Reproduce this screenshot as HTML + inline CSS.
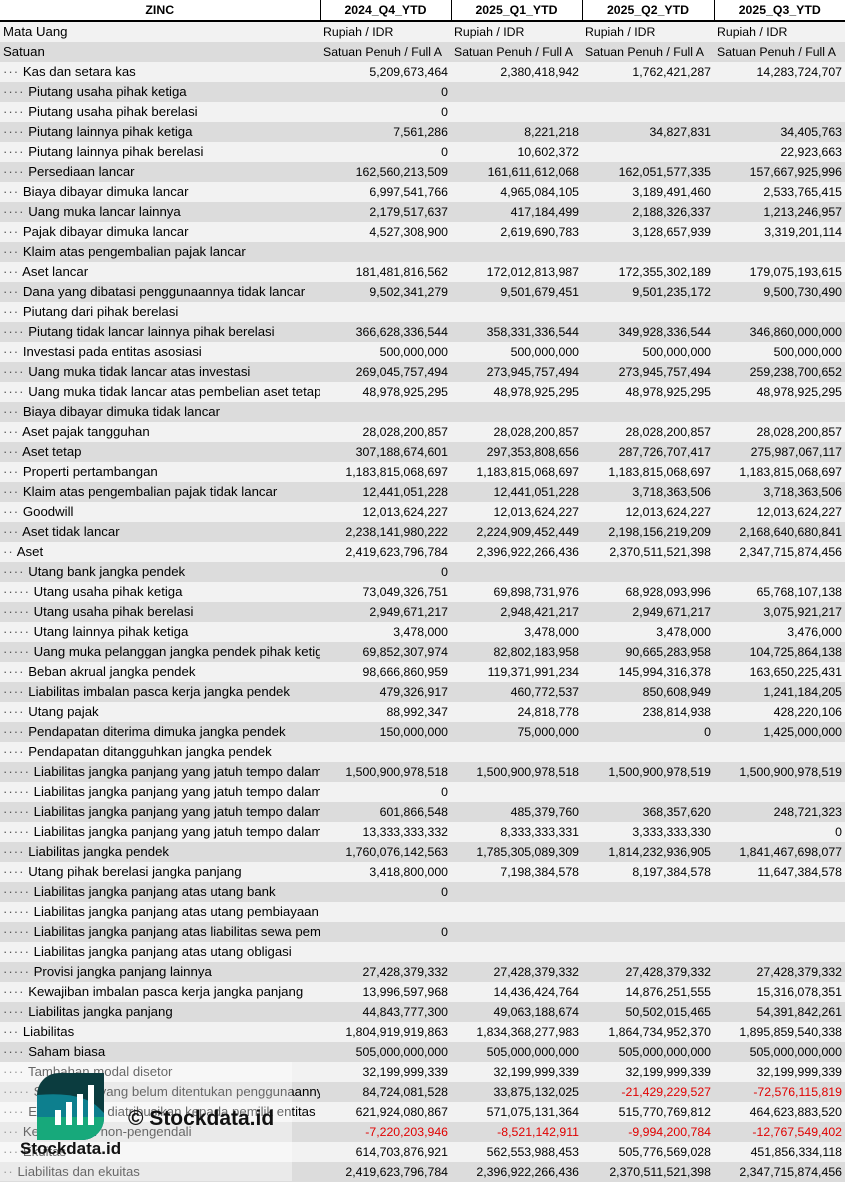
<!DOCTYPE html>
<html><head><meta charset="utf-8"><style>
body{margin:0;width:845px;height:1181px;overflow:hidden;background:#fff;font-family:"Liberation Sans",sans-serif;font-size:12.3px;color:#000}
table{border-collapse:collapse;table-layout:fixed;width:845px}
td{height:20px;padding:0 3px;white-space:nowrap;overflow:hidden;text-overflow:clip;line-height:20px;box-sizing:border-box}
td:first-child{font-size:13.2px}
tr:nth-child(even) td{background:#f2f2f2}
tr:nth-child(odd) td{background:#dcdcdc}
tr.h td{background:#fff;font-weight:bold;text-align:center;border-right:1px solid #000;border-bottom:2px solid #000;height:21px;line-height:19px;font-size:12.3px}
td.n{text-align:right}
.r{color:#e00000}
.d{color:#555;letter-spacing:1px}
</style></head><body>
<table>
<colgroup><col style="width:320px"><col style="width:131px"><col style="width:131px"><col style="width:132px"><col style="width:131px"></colgroup>
<tr class="h"><td>ZINC</td><td>2024_Q4_YTD</td><td>2025_Q1_YTD</td><td>2025_Q2_YTD</td><td style="border-right:none">2025_Q3_YTD</td></tr>
<tr><td>Mata Uang</td><td>Rupiah / IDR</td><td>Rupiah / IDR</td><td>Rupiah / IDR</td><td>Rupiah / IDR</td></tr>
<tr><td>Satuan</td><td>Satuan Penuh / Full A</td><td>Satuan Penuh / Full A</td><td>Satuan Penuh / Full A</td><td>Satuan Penuh / Full A</td></tr>
<tr><td><span class="d">···</span> Kas dan setara kas</td><td class="n">5,209,673,464</td><td class="n">2,380,418,942</td><td class="n">1,762,421,287</td><td class="n">14,283,724,707</td></tr>
<tr><td><span class="d">····</span> Piutang usaha pihak ketiga</td><td class="n">0</td><td></td><td></td><td></td></tr>
<tr><td><span class="d">····</span> Piutang usaha pihak berelasi</td><td class="n">0</td><td></td><td></td><td></td></tr>
<tr><td><span class="d">····</span> Piutang lainnya pihak ketiga</td><td class="n">7,561,286</td><td class="n">8,221,218</td><td class="n">34,827,831</td><td class="n">34,405,763</td></tr>
<tr><td><span class="d">····</span> Piutang lainnya pihak berelasi</td><td class="n">0</td><td class="n">10,602,372</td><td></td><td class="n">22,923,663</td></tr>
<tr><td><span class="d">····</span> Persediaan lancar</td><td class="n">162,560,213,509</td><td class="n">161,611,612,068</td><td class="n">162,051,577,335</td><td class="n">157,667,925,996</td></tr>
<tr><td><span class="d">···</span> Biaya dibayar dimuka lancar</td><td class="n">6,997,541,766</td><td class="n">4,965,084,105</td><td class="n">3,189,491,460</td><td class="n">2,533,765,415</td></tr>
<tr><td><span class="d">····</span> Uang muka lancar lainnya</td><td class="n">2,179,517,637</td><td class="n">417,184,499</td><td class="n">2,188,326,337</td><td class="n">1,213,246,957</td></tr>
<tr><td><span class="d">···</span> Pajak dibayar dimuka lancar</td><td class="n">4,527,308,900</td><td class="n">2,619,690,783</td><td class="n">3,128,657,939</td><td class="n">3,319,201,114</td></tr>
<tr><td><span class="d">···</span> Klaim atas pengembalian pajak lancar</td><td></td><td></td><td></td><td></td></tr>
<tr><td><span class="d">···</span> Aset lancar</td><td class="n">181,481,816,562</td><td class="n">172,012,813,987</td><td class="n">172,355,302,189</td><td class="n">179,075,193,615</td></tr>
<tr><td><span class="d">···</span> Dana yang dibatasi penggunaannya tidak lancar</td><td class="n">9,502,341,279</td><td class="n">9,501,679,451</td><td class="n">9,501,235,172</td><td class="n">9,500,730,490</td></tr>
<tr><td><span class="d">···</span> Piutang dari pihak berelasi</td><td></td><td></td><td></td><td></td></tr>
<tr><td><span class="d">····</span> Piutang tidak lancar lainnya pihak berelasi</td><td class="n">366,628,336,544</td><td class="n">358,331,336,544</td><td class="n">349,928,336,544</td><td class="n">346,860,000,000</td></tr>
<tr><td><span class="d">···</span> Investasi pada entitas asosiasi</td><td class="n">500,000,000</td><td class="n">500,000,000</td><td class="n">500,000,000</td><td class="n">500,000,000</td></tr>
<tr><td><span class="d">····</span> Uang muka tidak lancar atas investasi</td><td class="n">269,045,757,494</td><td class="n">273,945,757,494</td><td class="n">273,945,757,494</td><td class="n">259,238,700,652</td></tr>
<tr><td><span class="d">····</span> Uang muka tidak lancar atas pembelian aset tetap</td><td class="n">48,978,925,295</td><td class="n">48,978,925,295</td><td class="n">48,978,925,295</td><td class="n">48,978,925,295</td></tr>
<tr><td><span class="d">···</span> Biaya dibayar dimuka tidak lancar</td><td></td><td></td><td></td><td></td></tr>
<tr><td><span class="d">···</span> Aset pajak tangguhan</td><td class="n">28,028,200,857</td><td class="n">28,028,200,857</td><td class="n">28,028,200,857</td><td class="n">28,028,200,857</td></tr>
<tr><td><span class="d">···</span> Aset tetap</td><td class="n">307,188,674,601</td><td class="n">297,353,808,656</td><td class="n">287,726,707,417</td><td class="n">275,987,067,117</td></tr>
<tr><td><span class="d">···</span> Properti pertambangan</td><td class="n">1,183,815,068,697</td><td class="n">1,183,815,068,697</td><td class="n">1,183,815,068,697</td><td class="n">1,183,815,068,697</td></tr>
<tr><td><span class="d">···</span> Klaim atas pengembalian pajak tidak lancar</td><td class="n">12,441,051,228</td><td class="n">12,441,051,228</td><td class="n">3,718,363,506</td><td class="n">3,718,363,506</td></tr>
<tr><td><span class="d">···</span> Goodwill</td><td class="n">12,013,624,227</td><td class="n">12,013,624,227</td><td class="n">12,013,624,227</td><td class="n">12,013,624,227</td></tr>
<tr><td><span class="d">···</span> Aset tidak lancar</td><td class="n">2,238,141,980,222</td><td class="n">2,224,909,452,449</td><td class="n">2,198,156,219,209</td><td class="n">2,168,640,680,841</td></tr>
<tr><td><span class="d">··</span> Aset</td><td class="n">2,419,623,796,784</td><td class="n">2,396,922,266,436</td><td class="n">2,370,511,521,398</td><td class="n">2,347,715,874,456</td></tr>
<tr><td><span class="d">····</span> Utang bank jangka pendek</td><td class="n">0</td><td></td><td></td><td></td></tr>
<tr><td><span class="d">·····</span> Utang usaha pihak ketiga</td><td class="n">73,049,326,751</td><td class="n">69,898,731,976</td><td class="n">68,928,093,996</td><td class="n">65,768,107,138</td></tr>
<tr><td><span class="d">·····</span> Utang usaha pihak berelasi</td><td class="n">2,949,671,217</td><td class="n">2,948,421,217</td><td class="n">2,949,671,217</td><td class="n">3,075,921,217</td></tr>
<tr><td><span class="d">·····</span> Utang lainnya pihak ketiga</td><td class="n">3,478,000</td><td class="n">3,478,000</td><td class="n">3,478,000</td><td class="n">3,476,000</td></tr>
<tr><td><span class="d">·····</span> Uang muka pelanggan jangka pendek pihak ketiga</td><td class="n">69,852,307,974</td><td class="n">82,802,183,958</td><td class="n">90,665,283,958</td><td class="n">104,725,864,138</td></tr>
<tr><td><span class="d">····</span> Beban akrual jangka pendek</td><td class="n">98,666,860,959</td><td class="n">119,371,991,234</td><td class="n">145,994,316,378</td><td class="n">163,650,225,431</td></tr>
<tr><td><span class="d">····</span> Liabilitas imbalan pasca kerja jangka pendek</td><td class="n">479,326,917</td><td class="n">460,772,537</td><td class="n">850,608,949</td><td class="n">1,241,184,205</td></tr>
<tr><td><span class="d">····</span> Utang pajak</td><td class="n">88,992,347</td><td class="n">24,818,778</td><td class="n">238,814,938</td><td class="n">428,220,106</td></tr>
<tr><td><span class="d">····</span> Pendapatan diterima dimuka jangka pendek</td><td class="n">150,000,000</td><td class="n">75,000,000</td><td class="n">0</td><td class="n">1,425,000,000</td></tr>
<tr><td><span class="d">····</span> Pendapatan ditangguhkan jangka pendek</td><td></td><td></td><td></td><td></td></tr>
<tr><td><span class="d">·····</span> Liabilitas jangka panjang yang jatuh tempo dalam</td><td class="n">1,500,900,978,518</td><td class="n">1,500,900,978,518</td><td class="n">1,500,900,978,519</td><td class="n">1,500,900,978,519</td></tr>
<tr><td><span class="d">·····</span> Liabilitas jangka panjang yang jatuh tempo dalam</td><td class="n">0</td><td></td><td></td><td></td></tr>
<tr><td><span class="d">·····</span> Liabilitas jangka panjang yang jatuh tempo dalam</td><td class="n">601,866,548</td><td class="n">485,379,760</td><td class="n">368,357,620</td><td class="n">248,721,323</td></tr>
<tr><td><span class="d">·····</span> Liabilitas jangka panjang yang jatuh tempo dalam</td><td class="n">13,333,333,332</td><td class="n">8,333,333,331</td><td class="n">3,333,333,330</td><td class="n">0</td></tr>
<tr><td><span class="d">····</span> Liabilitas jangka pendek</td><td class="n">1,760,076,142,563</td><td class="n">1,785,305,089,309</td><td class="n">1,814,232,936,905</td><td class="n">1,841,467,698,077</td></tr>
<tr><td><span class="d">····</span> Utang pihak berelasi jangka panjang</td><td class="n">3,418,800,000</td><td class="n">7,198,384,578</td><td class="n">8,197,384,578</td><td class="n">11,647,384,578</td></tr>
<tr><td><span class="d">·····</span> Liabilitas jangka panjang atas utang bank</td><td class="n">0</td><td></td><td></td><td></td></tr>
<tr><td><span class="d">·····</span> Liabilitas jangka panjang atas utang pembiayaan konsumen</td><td></td><td></td><td></td><td></td></tr>
<tr><td><span class="d">·····</span> Liabilitas jangka panjang atas liabilitas sewa pembiayaan</td><td class="n">0</td><td></td><td></td><td></td></tr>
<tr><td><span class="d">·····</span> Liabilitas jangka panjang atas utang obligasi</td><td></td><td></td><td></td><td></td></tr>
<tr><td><span class="d">·····</span> Provisi jangka panjang lainnya</td><td class="n">27,428,379,332</td><td class="n">27,428,379,332</td><td class="n">27,428,379,332</td><td class="n">27,428,379,332</td></tr>
<tr><td><span class="d">····</span> Kewajiban imbalan pasca kerja jangka panjang</td><td class="n">13,996,597,968</td><td class="n">14,436,424,764</td><td class="n">14,876,251,555</td><td class="n">15,316,078,351</td></tr>
<tr><td><span class="d">····</span> Liabilitas jangka panjang</td><td class="n">44,843,777,300</td><td class="n">49,063,188,674</td><td class="n">50,502,015,465</td><td class="n">54,391,842,261</td></tr>
<tr><td><span class="d">···</span> Liabilitas</td><td class="n">1,804,919,919,863</td><td class="n">1,834,368,277,983</td><td class="n">1,864,734,952,370</td><td class="n">1,895,859,540,338</td></tr>
<tr><td><span class="d">····</span> Saham biasa</td><td class="n">505,000,000,000</td><td class="n">505,000,000,000</td><td class="n">505,000,000,000</td><td class="n">505,000,000,000</td></tr>
<tr><td><span class="d">····</span> Tambahan modal disetor</td><td class="n">32,199,999,339</td><td class="n">32,199,999,339</td><td class="n">32,199,999,339</td><td class="n">32,199,999,339</td></tr>
<tr><td><span class="d">·····</span> Saldo laba yang belum ditentukan penggunaannya</td><td class="n">84,724,081,528</td><td class="n">33,875,132,025</td><td class="n r">-21,429,229,527</td><td class="n r">-72,576,115,819</td></tr>
<tr><td><span class="d">····</span> Ekuitas yang diatribusikan kepada pemilik entitas</td><td class="n">621,924,080,867</td><td class="n">571,075,131,364</td><td class="n">515,770,769,812</td><td class="n">464,623,883,520</td></tr>
<tr><td><span class="d">···</span> Kepentingan non-pengendali</td><td class="n r">-7,220,203,946</td><td class="n r">-8,521,142,911</td><td class="n r">-9,994,200,784</td><td class="n r">-12,767,549,402</td></tr>
<tr><td><span class="d">···</span> Ekuitas</td><td class="n">614,703,876,921</td><td class="n">562,553,988,453</td><td class="n">505,776,569,028</td><td class="n">451,856,334,118</td></tr>
<tr><td><span class="d">··</span> Liabilitas dan ekuitas</td><td class="n">2,419,623,796,784</td><td class="n">2,396,922,266,436</td><td class="n">2,370,511,521,398</td><td class="n">2,347,715,874,456</td></tr>
</table>
<div style="position:absolute;left:0;top:1062px;width:292px;height:119px;background:rgba(255,255,255,0.4)"></div>
<svg style="position:absolute;left:37px;top:1073px" width="67" height="67" viewBox="0 0 67 67">
<defs><clipPath id="c"><path d="M22 0H67V45A22 22 0 0 1 45 67H0V22A22 22 0 0 1 22 0Z"/></clipPath></defs>
<g clip-path="url(#c)"><rect width="67" height="67" fill="#0b3c3f"/><path d="M0 22Q45 18 62 35L67 40V67H0Z" fill="#0d7f8e"/><path d="M0 44H67V67H0Z" fill="#17a97b"/></g>
<rect x="18" y="37" width="6" height="15" fill="#fff"/><rect x="29" y="29" width="6" height="23" fill="#fff"/><rect x="40" y="21" width="6" height="31" fill="#fff"/><rect x="51" y="12" width="6" height="40" fill="#fff"/>
</svg>
<div style="position:absolute;left:128px;top:1107px;font:bold 21px 'Liberation Sans',sans-serif;color:#111">© Stockdata.id</div>
<div style="position:absolute;left:20px;top:1139px;font:bold 17px 'Liberation Sans',sans-serif;color:#111">Stockdata.id</div>
</body></html>
